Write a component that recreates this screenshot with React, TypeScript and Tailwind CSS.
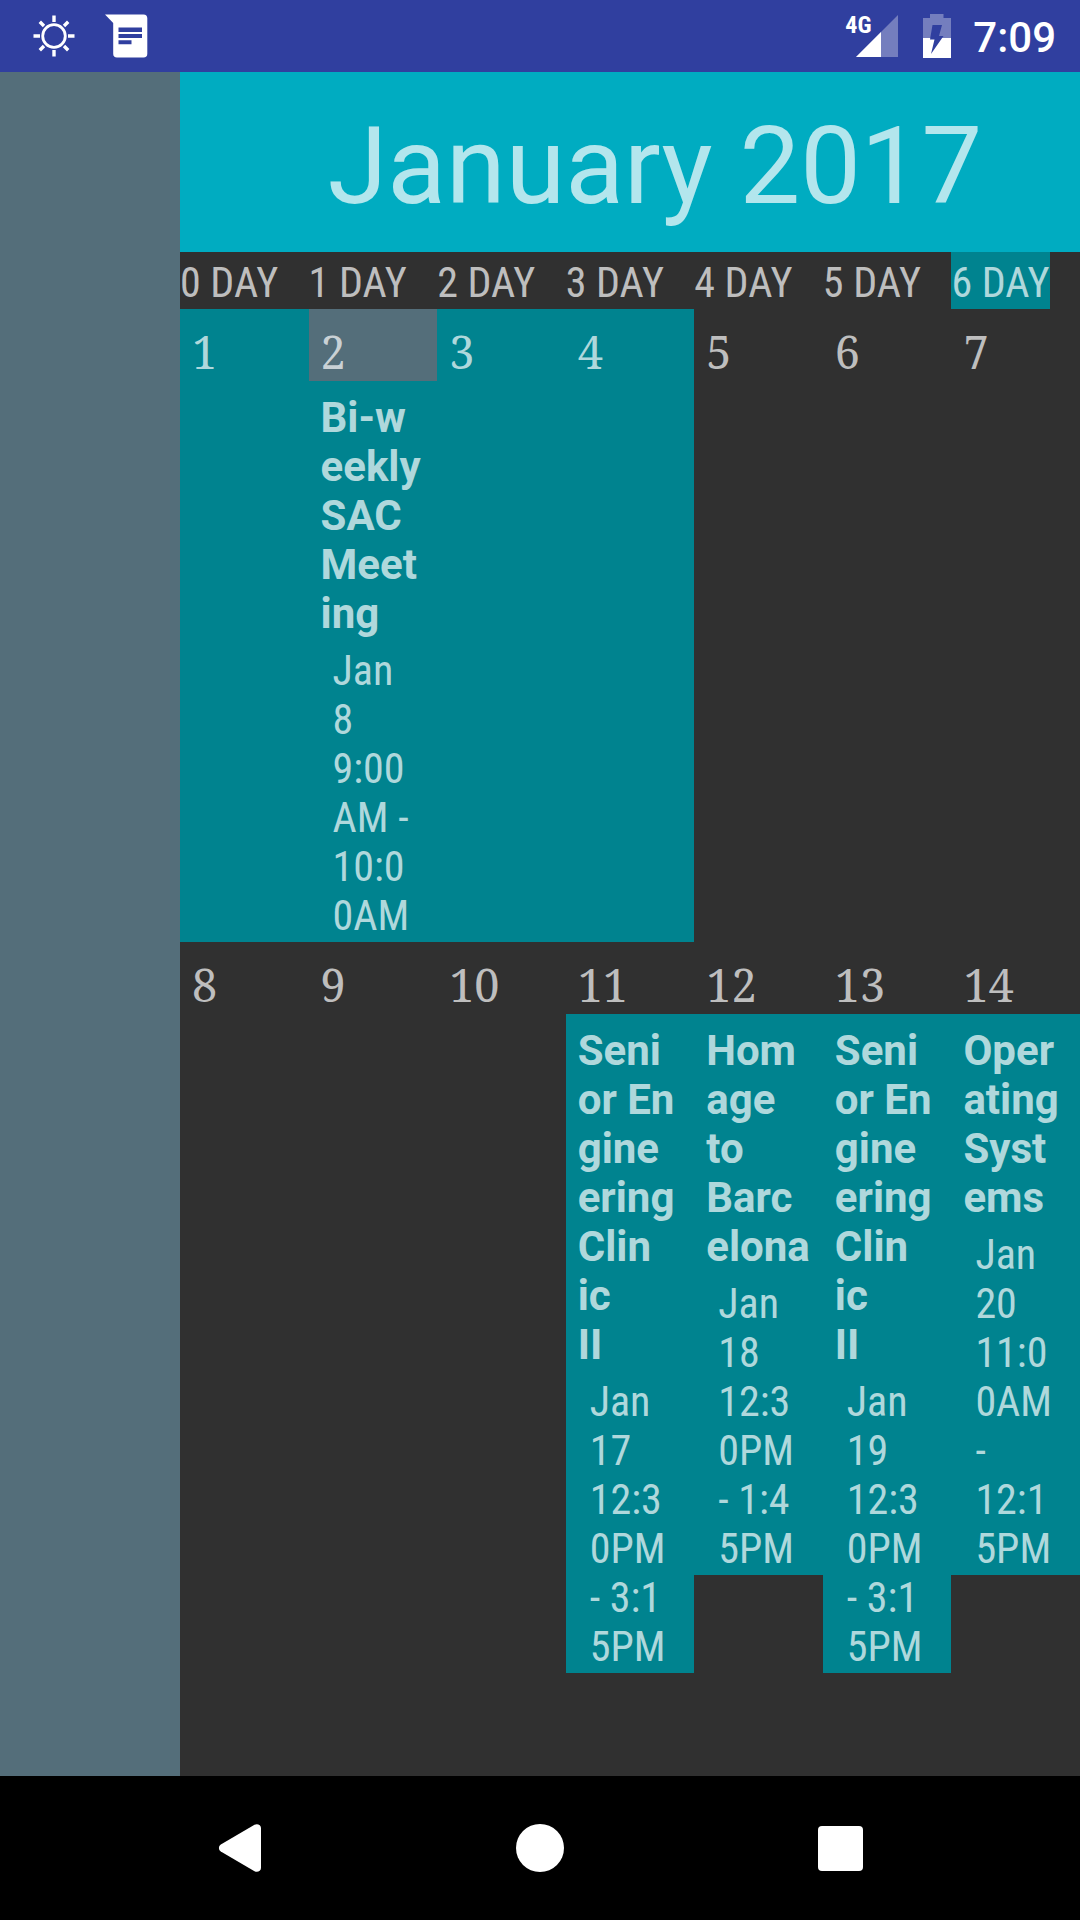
type CalendarEvent = { title: string[]; time: string[] };
type Day = { day: number; tone?: "range" | "today"; event?: CalendarEvent };

const weekdays = ["0 DAY", "1 DAY", "2 DAY", "3 DAY", "4 DAY", "5 DAY", "6 DAY"];

const clinicTitle = ["Seni", "or En", "gine", "ering", "Clin", "ic", "II"];

const weeks: Day[][] = [
  [
    { day: 1, tone: "range" },
    {
      day: 2,
      tone: "today",
      event: {
        title: ["Bi-w", "eekly", "SAC", "Meet", "ing"],
        time: ["Jan", "8", "9:00", "AM -", "10:0", "0AM"],
      },
    },
    { day: 3, tone: "range" },
    { day: 4, tone: "range" },
    { day: 5 },
    { day: 6 },
    { day: 7 },
  ],
  [
    { day: 8 },
    { day: 9 },
    { day: 10 },
    { day: 11, event: { title: clinicTitle, time: ["Jan", "17", "12:3", "0PM", "- 3:1", "5PM"] } },
    {
      day: 12,
      event: {
        title: ["Hom", "age", "to", "Barc", "elona"],
        time: ["Jan", "18", "12:3", "0PM", "- 1:4", "5PM"],
      },
    },
    { day: 13, event: { title: clinicTitle, time: ["Jan", "19", "12:3", "0PM", "- 3:1", "5PM"] } },
    {
      day: 14,
      event: {
        title: ["Oper", "ating", "Syst", "ems"],
        time: ["Jan", "20", "11:0", "0AM", "-", "12:1", "5PM"],
      },
    },
  ],
];

const condensed = "font-['Roboto_Condensed','Roboto',sans-serif]";

function StatusBar() {
  return (
    <header className="flex h-[72px] items-center justify-between bg-[#303f9f] pr-6 pl-8 text-white">
      <div className="flex items-center gap-7">
        <svg className="size-11" viewBox="0 0 44 44" fill="none" stroke="currentColor" strokeWidth="3.4" aria-label="Brightness">
          <circle cx="22" cy="22" r="11.3" strokeWidth="2.8" />
          <path d="M22 1.500v6.500M22 36v6.500M1.500 22H8M36 22h6.500M7.800 7.800l4.200 4.200M32 32l4.200 4.200M7.800 36.200l4.200-4.200M32 12l4.200-4.200" />
        </svg>
        <svg className="size-11" viewBox="0 0 44 44" aria-label="Message">
          <path fill="currentColor" d="M1 .5h38.500a3.800 3.800 0 0 1 3.800 3.800v35.500a3.800 3.800 0 0 1-3.800 3.800H13a3.800 3.800 0 0 1-3.800-3.800V9z" />
          <path fill="#303f9f" d="M14.500 13.500h23.500v4.500H14.500zM14.500 20h23.500v4H14.500zM14.500 26.300h13v4h-13z" />
        </svg>
      </div>
      <div className="flex items-center">
        <div className="relative mr-6">
          <svg className="h-11 w-[54px]" viewBox="0 0 54 44" aria-label="Signal">
            <path fill="#fff" fillOpacity=".33" d="M53 1v42H11z" />
            <path fill="#fff" d="M36 18v25H11z" />
          </svg>
          <span className={`absolute top-0 left-0 text-[24px] leading-[22px] font-bold ${condensed}`}>4G</span>
        </div>
        <svg className="mr-[22px] h-11 w-7" viewBox="0 0 28 44" aria-label="Battery charging">
          <path fill="#fff" fillOpacity=".33" d="M7 0h13.500v4H28v20H0V4h7z" />
          <path fill="#fff" d="M0 24h28v20H0z" />
          <path fill="#303f9f" d="M9.500 11h9.500l-3 11h4.500L8 40l3.500-14.500H7z" />
        </svg>
        <time className="pt-0.5 text-[42px] leading-[49px] font-medium">7:09</time>
      </div>
    </header>
  );
}

function DayCell({ day, tone, event }: Day) {
  return (
    <td className={`p-0 align-top ${tone ? "bg-[#00838f]" : ""}`}>
      <div
        className={`flex h-[72px] items-center pt-3.5 pl-3 font-['Noto_Serif','Liberation_Serif',serif] text-[45px] leading-[56px] ${
          tone === "today" ? "bg-[#546e7a]" : ""
        }`}
      >
        {day}
      </div>
      {event && (
        <div className="bg-[#00838f] pt-3 pb-0.5 pl-3 text-[42px] leading-[49px] whitespace-nowrap">
          <h2 className="font-bold">
            {event.title.map((line) => (
              <span key={line} className="block">
                {line}
              </span>
            ))}
          </h2>
          <p className={`pt-2 pl-3 ${condensed}`}>
            {event.time.map((line) => (
              <span key={line} className="block">
                {line}
              </span>
            ))}
          </p>
        </div>
      )}
    </td>
  );
}

function NavigationBar() {
  return (
    <nav className="grid h-36 grid-cols-3 bg-black px-[90px] text-white">
      <button type="button" aria-label="Back" className="flex items-center justify-center">
        <svg className="size-12" viewBox="0 0 48 48" fill="currentColor">
          <path d="M4.800 20.500 38.500.8c2.800-1.500 6.500 0 6.500 3.200v40c0 3.200-3.700 4.700-6.500 3.200L4.800 27.500c-2.500-1.500-2.500-5.500 0-7z" />
        </svg>
      </button>
      <button type="button" aria-label="Home" className="flex items-center justify-center">
        <span className="size-12 rounded-full bg-white" />
      </button>
      <button type="button" aria-label="Overview" className="flex items-center justify-center">
        <span className="size-[45px] rounded bg-white" />
      </button>
    </nav>
  );
}

export default function App() {
  return (
    <div className="flex min-h-screen flex-col bg-[#303030] font-['Roboto',sans-serif] text-white/70">
      <StatusBar />
      <div className="flex flex-1">
        <aside className="w-[180px] shrink-0 bg-[#546e7a]" />
        <main className="min-w-0 flex-1">
          <h1 className="flex h-[180px] items-center justify-center bg-[#00acc1] pt-2 pl-[50px] text-[108px] leading-[126px]">
            January 2017
          </h1>
          <table className="w-full table-fixed border-collapse">
            <thead>
              <tr>
                {weekdays.map((name, i) => (
                  <th key={name} scope="col" className={`p-0 text-left text-[42px] leading-[49px] font-normal whitespace-nowrap ${condensed}`}>
                    <span className={`block w-fit pt-1.5 pb-0.5 ${i === 6 ? "bg-[#00838f]" : ""}`}>{name}</span>
                  </th>
                ))}
              </tr>
            </thead>
            <tbody>
              {weeks.map((week) => (
                <tr key={week[0].day}>
                  {week.map((d) => (
                    <DayCell key={d.day} {...d} />
                  ))}
                </tr>
              ))}
            </tbody>
          </table>
        </main>
      </div>
      <NavigationBar />
    </div>
  );
}
